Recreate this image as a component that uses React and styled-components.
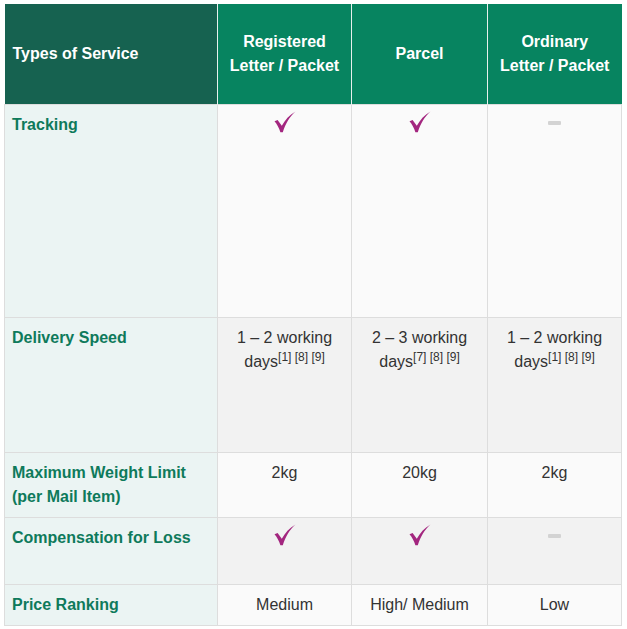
import React from 'react';
import styled, { createGlobalStyle } from 'styled-components';

const GlobalStyle = createGlobalStyle`
  body {
    margin: 0;
    background: #ffffff;
    font-family: "Liberation Sans", Arial, sans-serif;
  }
`;

const Wrapper = styled.div`
  padding: 4px;
`;

const Table = styled.table`
  width: 617px;
  border-collapse: collapse;
  table-layout: fixed;
  font-size: 16px;
  line-height: 24px;
  color: #333333;
`;

const HeadCell = styled.th`
  height: 100px;
  padding: 0 8px;
  background: ${(p) => (p.dark ? '#166250' : '#078460')};
  color: #ffffff;
  font-weight: bold;
  text-align: ${(p) => (p.dark ? 'left' : 'center')};
  vertical-align: middle;
  white-space: pre-line;
  border-left: 1px solid #e8efed;
  &:first-child {
    border-left: none;
  }
`;

const Row = styled.tr`
  height: ${(p) => p.h}px;
`;

const Label = styled.td`
  padding: 8px 7px;
  background: #ebf4f3;
  color: #0e7a5b;
  font-weight: bold;
  vertical-align: top;
  border: 1px solid #dddddd;
`;

const Cell = styled.td`
  padding: 8px 8px;
  background: ${(p) => (p.shade ? '#f2f2f2' : '#fafafa')};
  text-align: center;
  vertical-align: top;
  border: 1px solid #dddddd;
`;

const Sup = styled.sup`
  font-size: 12px;
  line-height: 0;
  vertical-align: 6px;
`;

const Dash = styled.span`
  display: block;
  width: 13px;
  height: 4px;
  margin: 8px auto 0;
  background: #d3d3d3;
  border-radius: 1px;
`;

const CheckIcon = styled.svg`
  display: block;
  margin: -2px auto 0;
`;

const Check = () => (
  <CheckIcon width="22" height="22" viewBox="0 0 22 22">
    <path
      d="M0.5 10.2 L3.6 8.9 L7.8 14.8 C11 9.2 15.2 4.2 21.5 0.6 C15.6 6 11.6 12.6 8.8 21.2 L6.4 21.2 C5 16.6 3 13.2 0.5 10.2 Z"
      fill="#a3267f"
    />
  </CheckIcon>
);

const Days = ({ first }) => (
  <>
    {first} working days
    <Sup>{first.startsWith('2') ? '[7]' : '[1]'} [8] [9]</Sup>
  </>
);

const headers = ['Registered\nLetter / Packet', 'Parcel', 'Ordinary\nLetter / Packet'];

const rows = [
  { label: 'Tracking', h: 213, shade: false, cells: [<Check />, <Check />, <Dash />] },
  {
    label: 'Delivery Speed',
    h: 135,
    shade: true,
    cells: [<Days first="1 – 2" />, <Days first="2 – 3" />, <Days first="1 – 2" />],
  },
  {
    label: 'Maximum Weight Limit (per Mail Item)',
    h: 64,
    shade: false,
    cells: ['2kg', '20kg', '2kg'],
  },
  { label: 'Compensation for Loss', h: 67, shade: true, cells: [<Check />, <Check />, <Dash />] },
  { label: 'Price Ranking', h: 39, shade: false, cells: ['Medium', 'High/ Medium', 'Low'] },
];

export default function App() {
  return (
    <Wrapper>
      <GlobalStyle />
      <Table>
        <colgroup>
          <col style={{ width: 213 }} />
          <col style={{ width: 134 }} />
          <col style={{ width: 136 }} />
          <col style={{ width: 134 }} />
        </colgroup>
        <thead>
          <tr>
            <HeadCell dark>Types of Service</HeadCell>
            {headers.map((h) => (
              <HeadCell key={h}>{h}</HeadCell>
            ))}
          </tr>
        </thead>
        <tbody>
          {rows.map((r) => (
            <Row key={r.label} h={r.h}>
              <Label>{r.label}</Label>
              {r.cells.map((c, i) => (
                <Cell key={i} shade={r.shade}>
                  {c}
                </Cell>
              ))}
            </Row>
          ))}
        </tbody>
      </Table>
    </Wrapper>
  );
}
